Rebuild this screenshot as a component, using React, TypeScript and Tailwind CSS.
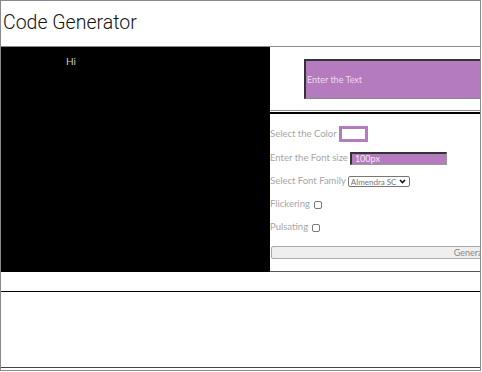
import { useState } from "react"

const FONT = { fontFamily: "Lato, 'Noto Sans', sans-serif" }

export default function App() {
  const [text, setText] = useState("")
  const [size, setSize] = useState("100px")
  const [flicker, setFlicker] = useState(false)
  const [pulse, setPulse] = useState(false)

  return (
    <div style={FONT} className="w-[481px] h-[371px] border border-[#8a8a8a] overflow-hidden flex flex-col bg-white">
      {/* header */}
      <div className="h-[46px] shrink-0 border-b border-[#8a8a8a] flex items-center pl-[2px] pb-[1px]">
        <h1 style={{ fontFamily: "Roboto, sans-serif" }} className="text-[19.5px] font-light text-[#111] leading-none">
          Code Generator
        </h1>
      </div>

      {/* preview + form */}
      <div className="h-[225px] shrink-0 flex">
        <div className="w-[269px] shrink-0 bg-black pl-[65px] pt-[7px] text-[10px] leading-[14px]">
          <span className="text-[#c8c8c8]">Hi</span>
        </div>

        <div className="flex-1 min-w-0 flex flex-col overflow-hidden border-b border-[#555]">
          <div className="h-[64px] shrink-0 border-b border-[#8a8a8a] pl-[34px] pt-[12px]">
            <input
              value={text}
              onChange={e => setText(e.target.value)}
              placeholder="Enter the Text"
              className="w-[200px] h-[40px] bg-[#b47bbf] border-t-2 border-l-2 border-t-[#333] border-l-[#333] border-b border-r border-b-[#888] border-r-[#888] pl-[1px] text-[9px] text-white placeholder:text-[#eadcec] outline-none"
            />
          </div>

          <div className="flex-1 mt-[1px] border-t-2 border-black pt-[8px] text-[9.5px] text-[#a6a6a6]">
            <div className="h-[24px] flex items-center gap-[2px]">
              <span>Select the Color</span>
              <div className="w-[29px] h-[16px] border-[3px] border-[#b47bbf] bg-white" />
            </div>
            <div className="h-[24px] flex items-center gap-[2px]">
              <span>Enter the Font size</span>
              <input
                value={size}
                onChange={e => setSize(e.target.value)}
                className="w-[97px] h-[13px] bg-[#b47bbf] border-t-2 border-l-2 border-t-[#333] border-l-[#333] border-b border-r border-b-[#999] border-r-[#999] pl-[3px] text-[9px] text-[#eee] outline-none"
              />
            </div>
            <div className="h-[23px] flex items-center gap-[2px]">
              <span>Select Font Family</span>
              <div className="w-[62px] h-[11px] shrink-0 border border-[#777] rounded-[2px] flex items-center justify-between pl-[2px] pr-[3px] text-[8px] text-[#777] overflow-hidden">
                <span className="leading-none whitespace-nowrap">Almendra SC</span>
                <svg width="7" height="5" viewBox="0 0 7 5" className="shrink-0">
                  <path d="M1 1l2.5 2.5L6 1" stroke="#111" strokeWidth="1.6" fill="none" />
                </svg>
              </div>
            </div>
            <label className="h-[23px] flex items-center gap-[4px]">
              <span>Flickering</span>
              <input
                type="checkbox"
                checked={flicker}
                onChange={() => setFlicker(!flicker)}
                className="appearance-none w-[8px] h-[8px] border border-[#777] rounded-[2px] bg-white"
              />
            </label>
            <label className="h-[23px] flex items-center gap-[4px]">
              <span>Pulsating</span>
              <input
                type="checkbox"
                checked={pulse}
                onChange={() => setPulse(!pulse)}
                className="appearance-none w-[8px] h-[8px] border border-[#777] rounded-[2px] bg-white"
              />
            </label>
            <button className="mt-[7px] ml-[1px] w-[402px] h-[13px] bg-[#efefef] border border-[#aaa] rounded-[2px] text-[9px] text-[#888] leading-none">
              Generate
            </button>
          </div>
        </div>
      </div>

      <div className="h-[20px] shrink-0 border-b border-black" />
      <div className="h-[76px] shrink-0 border-b border-[#444]" />
    </div>
  )
}
